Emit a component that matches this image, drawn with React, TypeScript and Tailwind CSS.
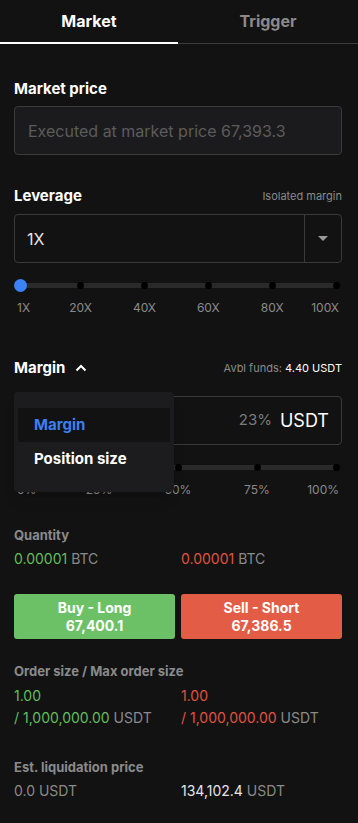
import React from "react";

const LEV = [
  { label: "1X", pos: 0 },
  { label: "20X", pos: 60.6 },
  { label: "40X", pos: 124.5 },
  { label: "60X", pos: 188.3 },
  { label: "80X", pos: 252.2 },
  { label: "100X", pos: 316 },
];
const PCT = [
  { label: "0%", pos: 0 },
  { label: "25%", pos: 79 },
  { label: "50%", pos: 158 },
  { label: "75%", pos: 237 },
  { label: "100%", pos: 316 },
];

function Slider({ marks, showBlue }: { marks: { label: string; pos: number }[]; showBlue: boolean }) {
  return (
    <div>
      <div className="relative h-[14px] mx-[6px]">
        <div className="absolute left-0 right-0 top-[5px] h-[5px] rounded-full bg-[#2a2a2a]" />
        {marks.map((m) => (
          <div
            key={m.label}
            className="absolute top-[4px] w-[7px] h-[7px] rounded-full bg-black"
            style={{ left: m.pos - 3.5 }}
          />
        ))}
        {showBlue && <div className="absolute left-[-6.5px] top-[0.5px] w-[13px] h-[13px] rounded-full bg-[#3b82f6]" />}
      </div>
      <div className="relative h-[16px] mt-[8px] text-[12px] leading-[16px] text-[#8a8a8a]">
        {marks.map((m, i) => {
          if (i === 0) return <span key={m.label} className="absolute left-[3px]">{m.label}</span>;
          if (i === marks.length - 1) return <span key={m.label} className="absolute right-[3px]">{m.label}</span>;
          return (
            <span key={m.label} className="absolute -translate-x-1/2" style={{ left: m.pos + 6 }}>
              {m.label}
            </span>
          );
        })}
      </div>
    </div>
  );
}

export default function App() {
  return (
    <div className="w-[358px] min-h-[823px] bg-[#121212] text-white" style={{ fontFamily: "Inter, 'Noto Sans', sans-serif" }}>
      <div className="flex">
        <div className="w-[178px] h-[44px] flex items-center justify-center border-b-2 border-white text-[16px] font-bold">Market</div>
        <div className="flex-1 h-[44px] flex items-center justify-center border-b border-[#3c3c3c] text-[16px] font-bold text-[#8a8a8a] pb-[1px]">Trigger</div>
      </div>
      <div className="pl-[14px] pr-[16px]">
        <div className="mt-[35px] text-[15px] leading-[20px] font-bold">Market price</div>
        <div className="mt-[7px] h-[49px] rounded-[4px] border border-[#3a3a3a] bg-[#1b1b1d] flex items-center px-[13px] text-[16px] text-[#5c5c5c]">
          Executed at market price 67,393.3
        </div>

        <div className="mt-[31px] flex items-center justify-between">
          <span className="text-[15px] leading-[20px] font-bold">Leverage</span>
          <span className="text-[11px] text-[#8a8a8a]">Isolated margin</span>
        </div>
        <div className="mt-[8px] h-[49px] rounded-[4px] border border-[#3a3a3a] flex">
          <div className="flex-1 flex items-center pl-[12px] text-[16px] text-[#e5e5e5]">1X</div>
          <div className="w-[37px] border-l border-[#3a3a3a] flex items-center justify-center">
            <svg width="10" height="6" viewBox="0 0 10 6"><path d="M0 0h10L5 5z" fill="#9a9a9a" /></svg>
          </div>
        </div>
        <div className="mt-[15px]">
          <Slider marks={LEV} showBlue />
        </div>

        <div className="relative">
          <div className="mt-[42px] flex items-center justify-between">
            <span className="flex items-center text-[15px] leading-[20px] font-bold">
              Margin
              <svg className="ml-[10px]" width="12" height="8" viewBox="0 0 12 8">
                <path d="M1.5 6.5L6 2l4.5 4.5" stroke="white" strokeWidth="2" fill="none" />
              </svg>
            </span>
            <span className="text-[11px] text-[#8a8a8a]">
              Avbl funds: <span className="text-white">4.40 USDT</span>
            </span>
          </div>
          <div className="mt-[18px] h-[49px] rounded-[4px] border border-[#3a3a3a] flex items-center justify-end pr-[12px]">
            <span className="text-[15px] text-[#7a7a7a]">23%</span>
            <span className="ml-[8px] text-[18px] text-white">USDT</span>
          </div>
          <div className="mt-[15px]">
            <Slider marks={PCT} showBlue={false} />
          </div>

          <div className="absolute left-0 top-[34px] w-[160px] h-[100px] rounded-[4px] bg-[#1c1c1e] pt-[16px] px-[4px] shadow-lg">
            <div className="h-[34px] bg-[#121212] flex items-center pl-[16px] text-[15px] font-bold text-[#3d7ff0]">Margin</div>
            <div className="h-[34px] flex items-center pl-[16px] text-[15px] font-bold text-white">Position size</div>
          </div>
        </div>

        <div className="mt-[28px] text-[13px] leading-[18px] font-bold text-[#8a8a8a]">Quantity</div>
        <div className="mt-[5px] grid grid-cols-2 gap-[6px] text-[14px] leading-[20px]">
          <div><span className="text-[#64bd5a]">0.00001</span> <span className="text-[#8a8a8a]">BTC</span></div>
          <div><span className="text-[#e0533f]">0.00001</span> <span className="text-[#8a8a8a]">BTC</span></div>
        </div>

        <div className="mt-[25px] grid grid-cols-2 gap-[6px]">
          <div className="h-[45px] rounded-[3px] bg-[#6cc167] flex flex-col items-center justify-center text-[14px] leading-[18px] font-bold text-white">
            <span>Buy - Long</span>
            <span>67,400.1</span>
          </div>
          <div className="h-[45px] rounded-[3px] bg-[#e35c46] flex flex-col items-center justify-center text-[14px] leading-[18px] font-bold text-white">
            <span>Sell - Short</span>
            <span>67,386.5</span>
          </div>
        </div>

        <div className="mt-[23px] text-[13px] leading-[18px] font-bold text-[#8a8a8a]">Order size / Max order size</div>
        <div className="mt-[5px] grid grid-cols-2 gap-[6px] text-[14px] leading-[22px]">
          <div>
            <div className="text-[#64bd5a]">1.00</div>
            <div><span className="text-[#64bd5a]">/ 1,000,000.00</span> <span className="text-[#8a8a8a]">USDT</span></div>
          </div>
          <div>
            <div className="text-[#e0533f]">1.00</div>
            <div><span className="text-[#e0533f]">/ 1,000,000.00</span> <span className="text-[#8a8a8a]">USDT</span></div>
          </div>
        </div>

        <div className="mt-[29px] text-[13px] leading-[18px] font-bold text-[#8a8a8a]">Est. liquidation price</div>
        <div className="mt-[5px] grid grid-cols-2 gap-[6px] text-[14px] leading-[20px]">
          <div className="text-[#8a8a8a]">0.0 USDT</div>
          <div><span className="text-[#e5e5e5]">134,102.4</span> <span className="text-[#8a8a8a]">USDT</span></div>
        </div>
      </div>
    </div>
  );
}
